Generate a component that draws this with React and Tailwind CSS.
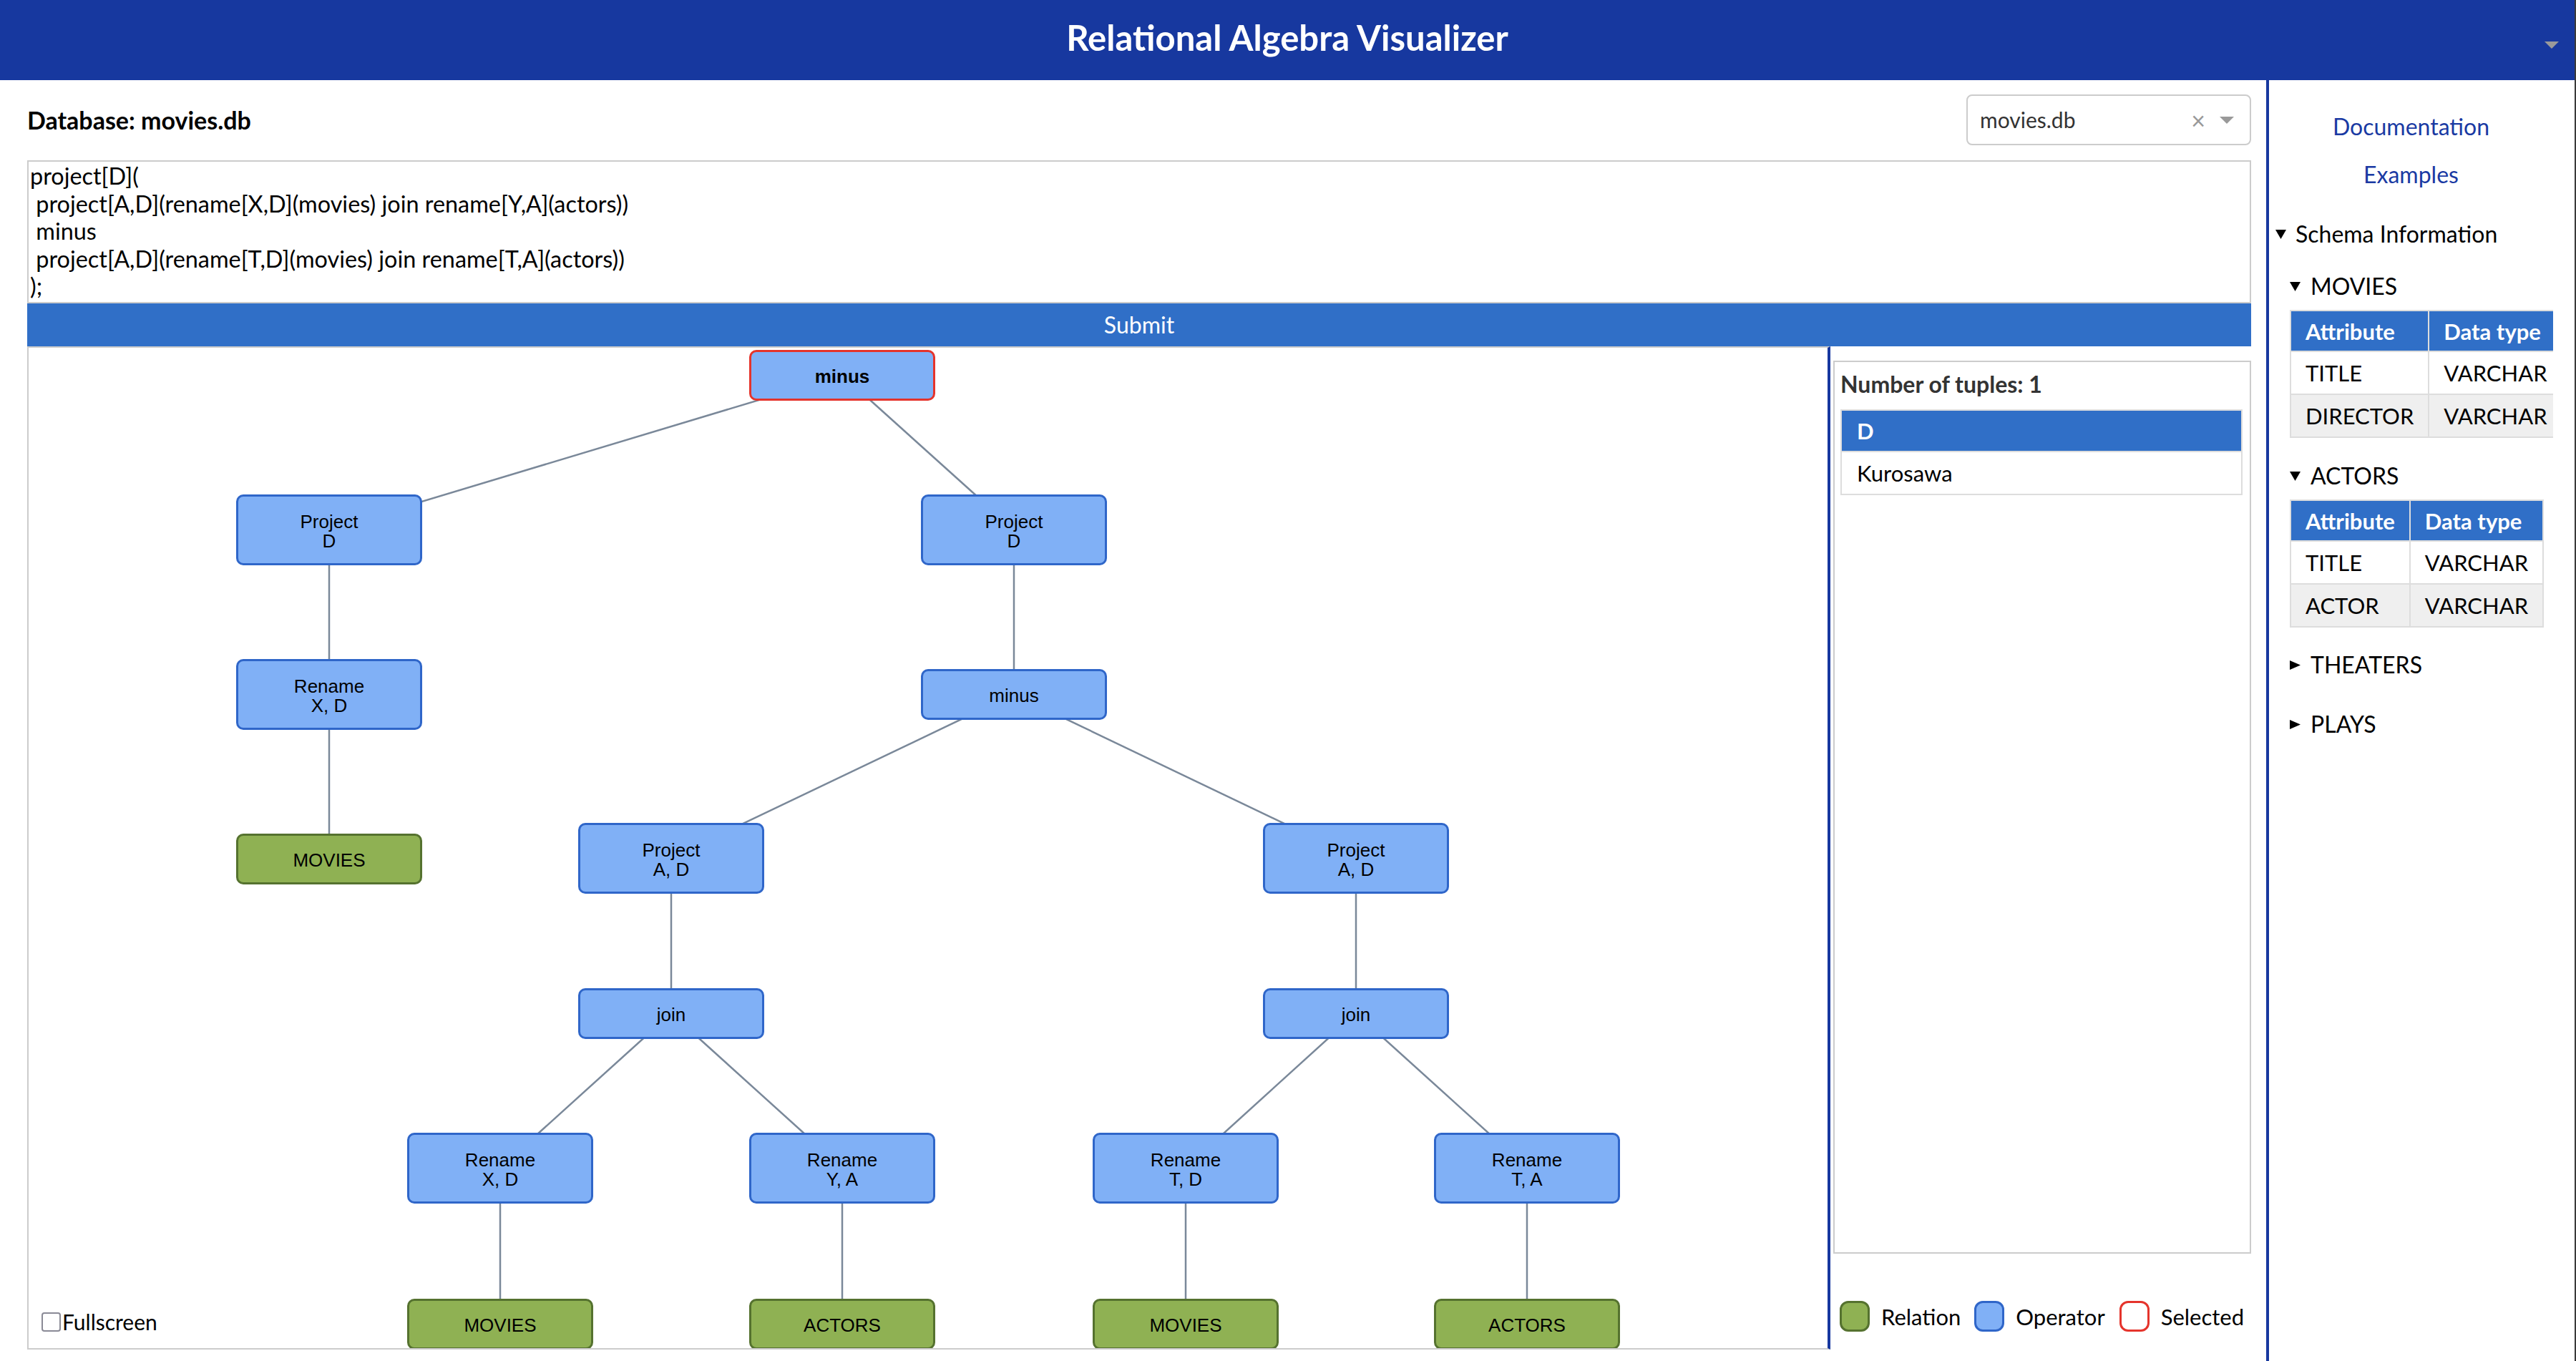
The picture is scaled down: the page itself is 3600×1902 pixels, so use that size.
import React from 'react';

const nodes = [
  { id: 'root', cx: 1137, cy: 38, lines: ['minus'], kind: 'sel' },
  { id: 'pdl', cx: 420, cy: 254, lines: ['Project', 'D'] },
  { id: 'pdr', cx: 1377, cy: 254, lines: ['Project', 'D'] },
  { id: 'rxd1', cx: 420, cy: 484, lines: ['Rename', 'X, D'] },
  { id: 'mv1', cx: 420, cy: 714, lines: ['MOVIES'], kind: 'rel' },
  { id: 'mn2', cx: 1377, cy: 484, lines: ['minus'] },
  { id: 'pal', cx: 898, cy: 713, lines: ['Project', 'A, D'] },
  { id: 'par', cx: 1855, cy: 713, lines: ['Project', 'A, D'] },
  { id: 'jl', cx: 898, cy: 930, lines: ['join'] },
  { id: 'jr', cx: 1855, cy: 930, lines: ['join'] },
  { id: 'rxd2', cx: 659, cy: 1146, lines: ['Rename', 'X, D'] },
  { id: 'rya', cx: 1137, cy: 1146, lines: ['Rename', 'Y, A'] },
  { id: 'rtd', cx: 1617, cy: 1146, lines: ['Rename', 'T, D'] },
  { id: 'rta', cx: 2094, cy: 1146, lines: ['Rename', 'T, A'] },
  { id: 'mv2', cx: 659, cy: 1364, lines: ['MOVIES'], kind: 'rel' },
  { id: 'ac1', cx: 1137, cy: 1364, lines: ['ACTORS'], kind: 'rel' },
  { id: 'mv3', cx: 1617, cy: 1364, lines: ['MOVIES'], kind: 'rel' },
  { id: 'ac2', cx: 2094, cy: 1364, lines: ['ACTORS'], kind: 'rel' },
];

const edges = [
  ['root', 'pdl'], ['root', 'pdr'], ['pdl', 'rxd1'], ['rxd1', 'mv1'],
  ['pdr', 'mn2'], ['mn2', 'pal'], ['mn2', 'par'], ['pal', 'jl'], ['par', 'jr'],
  ['jl', 'rxd2'], ['jl', 'rya'], ['jr', 'rtd'], ['jr', 'rta'],
  ['rxd2', 'mv2'], ['rya', 'ac1'], ['rtd', 'mv3'], ['rta', 'ac2'],
];

const byId = Object.fromEntries(nodes.map((n) => [n.id, n]));

function TreeNode({ node }) {
  const h = node.lines.length > 1 ? 99 : 71;
  const look =
    node.kind === 'rel'
      ? 'bg-[#8fb153] border-[#55722f]'
      : node.kind === 'sel'
      ? 'bg-[#80b0f6] border-[#e5342c] font-bold'
      : 'bg-[#80b0f6] border-[#2f66c9]';
  return (
    <div
      className={`absolute w-[260px] flex flex-col items-center justify-center rounded-[10px] border-[3px] pt-[5px] text-[26px] leading-[27px] text-black font-['Liberation_Sans',Arial,sans-serif] ${look}`}
      style={{ left: node.cx - 130, top: node.cy - h / 2, height: h }}
    >
      {node.lines.map((l) => (
        <span key={l}>{l}</span>
      ))}
    </div>
  );
}

function Tri({ dir = 'down' }) {
  return dir === 'down' ? (
    <svg width="15" height="13" viewBox="0 0 15 13" className="shrink-0">
      <path d="M0 0H15L7.5 13Z" fill="#000" />
    </svg>
  ) : (
    <svg width="15" height="13" viewBox="0 0 15 13" className="shrink-0">
      <path d="M0 0L15 6.5L0 13Z" fill="#000" />
    </svg>
  );
}

function SchemaTable({ rows }) {
  return (
    <table className="mt-[15px] border-collapse whitespace-nowrap text-[31px]">
      <thead>
        <tr className="bg-[#306fc7] text-white">
          <th className="h-[57px] border-2 border-[#dddddd] px-[20px] text-left font-bold">Attribute</th>
          <th className="h-[57px] border-2 border-[#dddddd] px-[20px] text-left font-bold">Data type</th>
        </tr>
      </thead>
      <tbody>
        {rows.map((r, i) => (
          <tr key={r} className={i % 2 ? 'bg-[#efefef]' : 'bg-white'}>
            <td className="h-[60px] border-2 border-[#dddddd] px-[20px]">{r}</td>
            <td className="h-[60px] border-2 border-[#dddddd] px-[20px]">VARCHAR</td>
          </tr>
        ))}
      </tbody>
    </table>
  );
}

function Swatch({ className }) {
  return <div className={`h-[43px] w-[42px] shrink-0 rounded-[12px] border-[3px] ${className}`} />;
}

export default function App() {
  return (
    <div className="flex h-[1902px] w-[3600px] flex-col overflow-hidden border-r-2 border-[#3a3a3a] bg-white font-['Lato','Open_Sans',sans-serif] text-black">
      <header className="relative flex h-[112px] shrink-0 items-center justify-center bg-[#17389f] pb-[6px]">
        <h1 className="text-[49px] font-bold text-white">Relational Algebra Visualizer</h1>
        <svg width="20" height="10" viewBox="0 0 20 10" className="absolute right-[22px] top-[58px]">
          <path d="M0 0H20L10 10Z" fill="#9a9a9a" />
        </svg>
      </header>

      <div className="flex min-h-0 flex-1">
        <main className="flex w-[3167px] shrink-0 flex-col pb-[16px] pl-[38px] pr-[21px]">
          <div className="flex h-[91px] shrink-0 items-center justify-between pt-[20px]">
            <div className="text-[34px] font-bold">Database: movies.db</div>
            <div className="flex h-[71px] w-[398px] items-center rounded-[8px] border-2 border-[#cccccc] pl-[17px] pr-[22px] text-[30px] text-[#333333]">
              <span className="flex-1">movies.db</span>
              <span className="mr-[20px] text-[34px] leading-none text-[#999999]">×</span>
              <svg width="20" height="10" viewBox="0 0 20 10">
                <path d="M0 0H20L10 10Z" fill="#999999" />
              </svg>
            </div>
          </div>

          <div className="mt-[21px] h-[200px] shrink-0 overflow-hidden whitespace-pre border-2 border-[#cccccc] px-[2px] pt-[1px] text-[32.4px] leading-[38.5px]">
{`project[D](
 project[A,D](rename[X,D](movies) join rename[Y,A](actors))
 minus
 project[A,D](rename[T,D](movies) join rename[T,A](actors))
);`}
          </div>

          <button className="flex h-[60px] shrink-0 items-center justify-center bg-[#306fc7] text-[32px] text-white">
            Submit
          </button>

          <div className="flex min-h-0 flex-1">
            <section className="relative w-[2520px] shrink-0 overflow-hidden border-b-2 border-l-2 border-r-4 border-t-2 border-b-[#cccccc] border-l-[#cccccc] border-t-[#cccccc] border-r-[#17389f]">
              <svg className="absolute left-0 top-0" width="2514" height="1400">
                {edges.map(([a, b]) => (
                  <line
                    key={a + b}
                    x1={byId[a].cx}
                    y1={byId[a].cy}
                    x2={byId[b].cx}
                    y2={byId[b].cy}
                    stroke="#7a8899"
                    strokeWidth="2.5"
                  />
                ))}
              </svg>
              {nodes.map((n) => (
                <TreeNode key={n.id} node={n} />
              ))}
              <label className="absolute bottom-[19px] left-[18px] flex items-center text-[30px] leading-[36px]">
                <span className="h-[27px] w-[27px] rounded-[4px] border-2 border-[#8a8a96] bg-white" />
                <span className="ml-[2px]">Fullscreen</span>
              </label>
            </section>

            <section className="flex w-[588px] flex-col">
              <div className="ml-[4px] mt-[20px] flex-1 border-2 border-[#cccccc] pb-[10px] pl-[8px] pr-[10px] pt-[13px]">
                <div className="text-[32px] font-bold leading-[36px] text-[#333333]">Number of tuples: 1</div>
                <table className="mt-[17px] w-full border-collapse text-[31px] leading-[36px]">
                  <thead>
                    <tr className="bg-[#306fc7] text-white">
                      <th className="h-[58px] border-2 border-[#dddddd] px-[21px] text-left font-bold">D</th>
                    </tr>
                  </thead>
                  <tbody>
                    <tr>
                      <td className="h-[60px] border-2 border-[#dddddd] px-[21px]">Kurosawa</td>
                    </tr>
                  </tbody>
                </table>
              </div>
              <div className="flex items-center pb-[25px] pl-[13px] pt-[66px] text-[31px] leading-[36px]">
                <Swatch className="border-[#55722f] bg-[#8fb153]" />
                <span className="ml-[16px]">Relation</span>
                <Swatch className="ml-[19px] border-[#2f66c9] bg-[#80b0f6]" />
                <span className="ml-[16px]">Operator</span>
                <Swatch className="ml-[20px] border-[#e5342c] bg-white" />
                <span className="ml-[16px]">Selected</span>
              </div>
            </section>
          </div>
        </main>

        <div className="w-[4px] shrink-0 bg-[#17389f]" />

        <aside className="flex-1 overflow-hidden">
          <div className="w-[397px] overflow-hidden pt-[47px] text-[32px] leading-[36px]">
            <div className="text-center text-[#1a3aa3]">Documentation</div>
            <div className="mt-[31px] text-center text-[#1a3aa3]">Examples</div>
            <div className="mt-[47px] flex items-center gap-[13px] pl-[9px]">
              <Tri />
              <span>Schema Information</span>
            </div>
            <div className="pl-[29px]">
              <div className="mt-[37px] flex items-center gap-[14px]">
                <Tri />
                <span>MOVIES</span>
              </div>
              <SchemaTable rows={['TITLE', 'DIRECTOR']} />
              <div className="mt-[35px] flex items-center gap-[14px]">
                <Tri />
                <span>ACTORS</span>
              </div>
              <SchemaTable rows={['TITLE', 'ACTOR']} />
              <div className="mt-[34px] flex items-center gap-[14px]">
                <Tri dir="right" />
                <span>THEATERS</span>
              </div>
              <div className="mt-[47px] flex items-center gap-[14px]">
                <Tri dir="right" />
                <span>PLAYS</span>
              </div>
            </div>
          </div>
        </aside>
      </div>
    </div>
  );
}
